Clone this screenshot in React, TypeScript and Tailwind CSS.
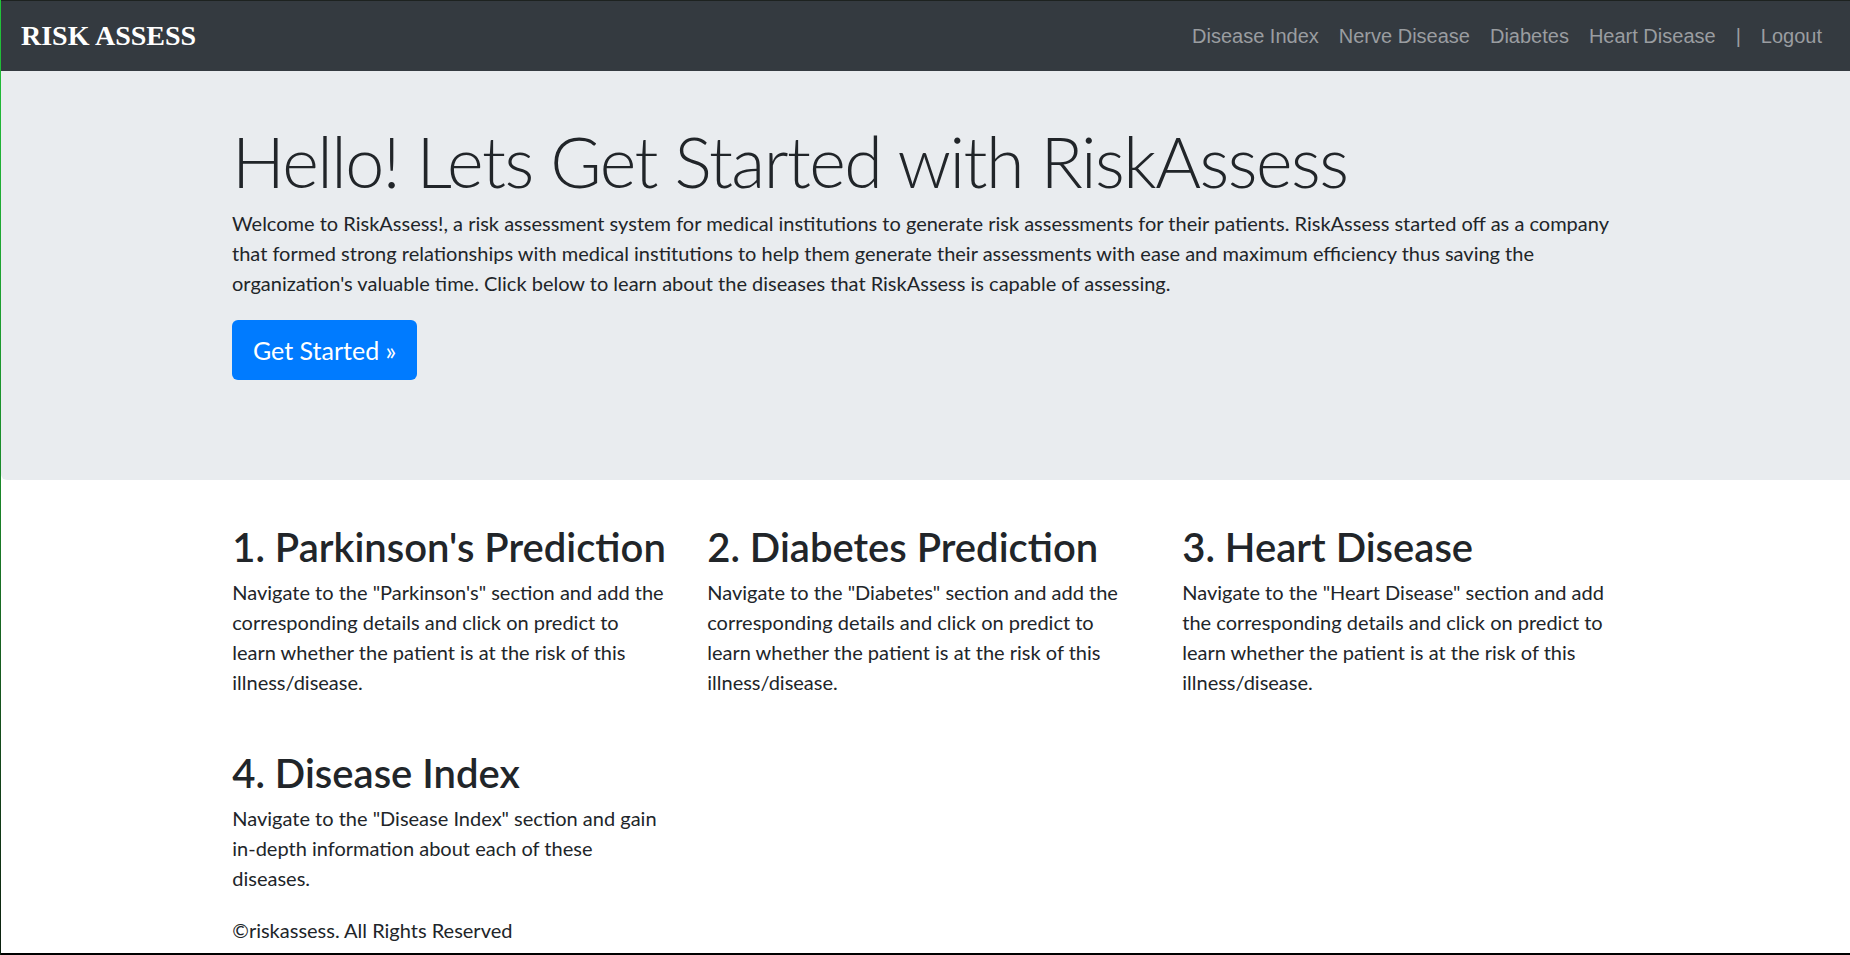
import React from "react";

const sans = "font-['Lato','Noto_Sans',sans-serif]";

function Card({ title, lines }: { title: string; lines: string[] }) {
  return (
    <div className="w-[475px] px-[18.75px]">
      <h2 className="text-[40px] leading-[48px] font-semibold text-[#212529] whitespace-nowrap">{title}</h2>
      <p className="mt-[6px] text-[20px] leading-[30px] text-[#212529] whitespace-nowrap">
        {lines.map((l, i) => (
          <React.Fragment key={i}>
            {l}
            {i < lines.length - 1 && <br />}
          </React.Fragment>
        ))}
      </p>
    </div>
  );
}

export default function App() {
  return (
    <div className={`w-[1850px] h-[955px] overflow-hidden flex bg-white ${sans}`}>
      <div className="w-px h-full bg-gradient-to-b from-[#22c43a] via-[#1a8a2a] to-[#0b1f0e]" />
      <div className="flex-1 flex flex-col border-t border-[#1d2220] border-b-2 border-b-black">
        <nav className="h-[70px] bg-[#343a40] flex items-center justify-between pl-[20px] pr-[28px]">
          <span className="font-['Liberation_Serif',serif] font-bold text-[28px] text-white">RISK ASSESS</span>
          <div className="flex items-center font-['Liberation_Sans',Arial,sans-serif] text-[20px] text-[#9a9da0]">
            <span className="px-[10px]">Disease Index</span>
            <span className="px-[10px]">Nerve Disease</span>
            <span className="px-[10px]">Diabetes</span>
            <span className="px-[10px]">Heart Disease</span>
            <span className="px-[10px]">|</span>
            <span className="pl-[10px]">Logout</span>
          </div>
        </nav>
        <section className="h-[409px] bg-[#e9ecef] rounded-bl-[6px] pt-[48px]">
          <div className="w-[1388px] ml-[231px]">
            <h1 className="text-[70px] leading-[84px] font-light tracking-[-1.5px] text-[#212529] whitespace-nowrap">
              Hello! Lets Get Started with RiskAssess
            </h1>
            <p className="mt-[5px] text-[20px] leading-[30px] text-[#212529] whitespace-nowrap">
              Welcome to RiskAssess!, a risk assessment system for medical institutions to generate risk assessments for their patients. RiskAssess started off as a company
              <br />
              that formed strong relationships with medical institutions to help them generate their assessments with ease and maximum efficiency thus saving the
              <br />
              organization's valuable time. Click below to learn about the diseases that RiskAssess is capable of assessing.
            </p>
            <button className="mt-[22px] h-[60px] px-[21px] rounded-[6px] bg-[#007bff] text-white text-[25px] leading-[30px]">
              Get Started »
            </button>
          </div>
        </section>
        <div className="ml-[212.5px] mt-[43px] flex flex-col">
          <div className="flex">
            <Card
              title="1. Parkinson's Prediction"
              lines={[
                'Navigate to the "Parkinson\'s" section and add the',
                "corresponding details and click on predict to",
                "learn whether the patient is at the risk of this",
                "illness/disease.",
              ]}
            />
            <Card
              title="2. Diabetes Prediction"
              lines={[
                'Navigate to the "Diabetes" section and add the',
                "corresponding details and click on predict to",
                "learn whether the patient is at the risk of this",
                "illness/disease.",
              ]}
            />
            <Card
              title="3. Heart Disease"
              lines={[
                'Navigate to the "Heart Disease" section and add',
                "the corresponding details and click on predict to",
                "learn whether the patient is at the risk of this",
                "illness/disease.",
              ]}
            />
          </div>
          <div className="flex mt-[52px]">
            <Card
              title="4. Disease Index"
              lines={[
                'Navigate to the "Disease Index" section and gain',
                "in-depth information about each of these",
                "diseases.",
              ]}
            />
          </div>
          <p className="ml-[18.75px] mt-[22px] text-[20px] leading-[30px] text-[#212529]">©riskassess. All Rights Reserved</p>
        </div>
      </div>
    </div>
  );
}
